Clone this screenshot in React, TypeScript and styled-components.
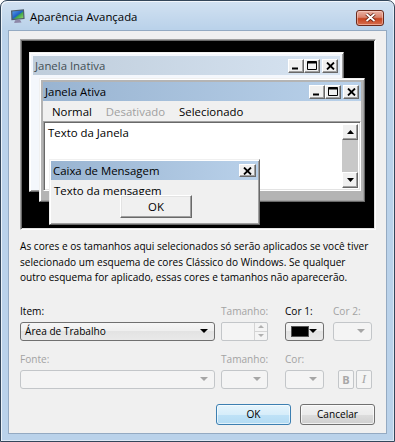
import styled, { createGlobalStyle } from 'styled-components'

const GlobalStyle = createGlobalStyle`
  html, body {
    margin: 0;
    padding: 0;
    background: #ffffff;
  }
  body {
    font-family: "Open Sans", "Noto Sans", "DejaVu Sans", sans-serif;
    font-size: 10.1px;
    color: #000;
  }
`

const Frame = styled.div`
  box-sizing: border-box;
  width: 395px;
  height: 442px;
  display: flex;
  flex-direction: column;
  padding: 0 7px 7px;
  border: 1px solid #34465a;
  border-radius: 7px 7px 0 0;
  background:
    linear-gradient(180deg, rgba(255, 255, 255, 0.35) 0, rgba(255, 255, 255, 0) 28px),
    #bad2ea;
  box-shadow: inset 1px 1px rgba(255, 255, 255, 0.7), inset -1px -1px rgba(255, 255, 255, 0.5);
`

const TitleBar = styled.div`
  height: 29px;
  display: flex;
  align-items: center;
  padding-left: 2px;
`

const TitleText = styled.span`
  margin-left: 4px;
  margin-top: 2px;
  font-size: 11.4px;
  color: #000;
`

const CloseButton = styled.div`
  margin-left: auto;
  margin-right: 3px;
  margin-top: 4px;
  width: 28px;
  height: 16px;
  box-sizing: border-box;
  border: 1px solid #6b2a1c;
  border-radius: 3px;
  display: flex;
  align-items: center;
  justify-content: center;
  background: linear-gradient(180deg, #eab2a4 0%, #d9826c 45%, #c5431f 55%, #d66f50 100%);
  box-shadow: inset 0 0 0 1px rgba(255, 220, 210, 0.5);
`

const Client = styled.div`
  flex: 1;
  display: flex;
  flex-direction: column;
  background: #f0f0f0;
  border: 1px solid #94aac2;
  padding: 8px 10px 0 11px;
`

/* ---------- preview ---------- */

const Preview = styled.div`
  position: relative;
  box-sizing: border-box;
  height: 191px;
  flex: none;
  font-size: 11.4px;
  background: #000;
  border: 1px solid;
  border-color: #a0a0a0 #ffffff #ffffff #a0a0a0;
  box-shadow: inset 1px 1px #696969, inset -1px -1px #e3e3e3;
  overflow: hidden;
`

const DemoWindow = styled.div<{ $active?: boolean }>`
  position: absolute;
  box-sizing: border-box;
  display: flex;
  flex-direction: column;
  padding: 3px;
  border: 1px solid;
  border-color: #f0f0f0 #696969 #696969 #f0f0f0;
  background: ${p => (p.$active ? '#b4b4b4' : '#f4f7fc')};
  box-shadow: inset 1px 1px #ffffff, inset -1px -1px #a0a0a0;
`

const Caption = styled.div<{ $active?: boolean }>`
  height: 19px;
  flex: none;
  display: flex;
  align-items: center;
  padding: 0 2px;
  background: ${p =>
    p.$active
      ? 'linear-gradient(90deg, #99b4d1, #b9d1ea)'
      : 'linear-gradient(90deg, #bfcddb, #d7e4f2)'};
  color: ${p => (p.$active ? '#000' : '#434e54')};
`

const CaptionTitle = styled.span`
  flex: 1;
  white-space: nowrap;
`

const CapButtons = styled.div`
  display: flex;
  align-items: center;
`

const CapBtn = styled.div<{ $gap?: number; $w?: number; $h?: number }>`
  box-sizing: border-box;
  width: ${p => p.$w ?? 16}px;
  height: ${p => p.$h ?? 14}px;
  margin-left: ${p => p.$gap ?? 0}px;
  background: #f0f0f0;
  border: 1px solid;
  border-color: #ffffff #696969 #696969 #ffffff;
  box-shadow: inset -1px -1px #a0a0a0;
  display: flex;
  align-items: center;
  justify-content: center;
`

const MenuBar = styled.div`
  height: 20px;
  flex: none;
  display: flex;
  align-items: center;
  background: #f0f0f0;
  padding-left: 2px;
`

const MenuItem = styled.span<{ $disabled?: boolean }>`
  padding: 0 7px;
  color: ${p => (p.$disabled ? '#a0a0a0' : '#000')};
`

const TextArea = styled.div`
  height: 70px;
  flex: none;
  display: flex;
  box-sizing: border-box;
  background: #fff;
  border: 1px solid;
  border-color: #a0a0a0 #ffffff #ffffff #a0a0a0;
  box-shadow: inset 1px 1px #696969, inset -1px -1px #e3e3e3;
  padding: 2px;
`

const TextBody = styled.div`
  flex: 1;
  padding: 1px 2px;
`

const ScrollBar = styled.div`
  width: 16px;
  display: flex;
  flex-direction: column;
  background: #c8c8c8;
`

const ScrollTrack = styled.div`
  flex: 1;
`

const MsgBody = styled.div`
  flex: 1;
  display: flex;
  flex-direction: column;
  background: #f0f0f0;
  padding: 3px 3px 0;
`

const MsgText = styled.div`
  line-height: 15px;
  white-space: nowrap;
`

const ClassicButton = styled.div`
  box-sizing: border-box;
  width: 72px;
  height: 23px;
  margin: -3px 0 0 66px;
  display: flex;
  align-items: center;
  justify-content: center;
  background: #f0f0f0;
  border: 1px solid;
  border-color: #ffffff #696969 #696969 #ffffff;
  box-shadow: inset -1px -1px #a0a0a0, inset 1px 1px #e3e3e3;
`

/* ---------- lower part ---------- */

const Description = styled.p`
  margin: 9px 0 0;
  line-height: 15.5px;
  white-space: nowrap;
`

const Fields = styled.div`
  margin-top: 18px;
  display: grid;
  grid-template-columns: 201px 64px 48px 1fr;
  row-gap: 11px;
`

const Field = styled.div`
  display: flex;
  flex-direction: column;
`

const Label = styled.span<{ $disabled?: boolean }>`
  line-height: 15px;
  margin-bottom: 3px;
  color: ${p => (p.$disabled ? '#a3a3a3' : '#000')};
  white-space: nowrap;
`

const Combo = styled.div<{ $w: number; $disabled?: boolean }>`
  box-sizing: border-box;
  width: ${p => p.$w}px;
  height: 19px;
  display: flex;
  align-items: center;
  padding: 0 6px 0 4px;
  border: 1px solid ${p => (p.$disabled ? '#c3c6c9' : '#707070')};
  border-radius: 3px;
  background: ${p =>
    p.$disabled
      ? '#f4f4f4'
      : 'linear-gradient(180deg, #f6f6f6 0%, #eeeeee 50%, #e3e3e3 50%, #e9e9e9 100%)'};
`

const ComboText = styled.span`
  flex: 1;
  white-space: nowrap;
`

const Arrow = styled.span<{ $disabled?: boolean }>`
  width: 0;
  height: 0;
  border-left: 4px solid transparent;
  border-right: 4px solid transparent;
  border-top: 4px solid ${p => (p.$disabled ? '#a6a6a6' : '#000')};
  margin-left: auto;
`

const Swatch = styled.span<{ $color: string }>`
  width: 20px;
  height: 11px;
  margin-left: 1px;
  background: ${p => p.$color};
  border: 1px solid #555;
  box-sizing: border-box;
`

const Spin = styled.div`
  box-sizing: border-box;
  width: 47px;
  height: 19px;
  display: flex;
  border: 1px solid #c3c6c9;
  border-radius: 2px;
  background: #f4f4f4;
`

const SpinButtons = styled.div`
  margin-left: auto;
  width: 12px;
  display: flex;
  flex-direction: column;
  border-left: 1px solid #d4d4d4;
`

const SpinPart = styled.div<{ $down?: boolean }>`
  flex: 1;
  display: flex;
  align-items: center;
  justify-content: center;
  border-top: ${p => (p.$down ? '1px solid #d4d4d4' : 'none')};
  &::after {
    content: '';
    border-left: 3px solid transparent;
    border-right: 3px solid transparent;
    ${p => (p.$down ? 'border-top: 3px solid #b0b0b0;' : 'border-bottom: 3px solid #b0b0b0;')}
  }
`

const StyleButtons = styled.div`
  display: flex;
  gap: 2px;
  margin-left: 5px;
`

const StyleBtn = styled.div<{ $italic?: boolean }>`
  box-sizing: border-box;
  width: 16px;
  height: 19px;
  display: flex;
  align-items: center;
  justify-content: center;
  border: 1px solid #c3c6c9;
  border-radius: 2px;
  background: #f4f4f4;
  color: #a8a8a8;
  font-family: ${p => (p.$italic ? '"Liberation Serif", serif' : '"Open Sans", sans-serif')};
  font-style: ${p => (p.$italic ? 'italic' : 'normal')};
  font-weight: ${p => (p.$italic ? 'normal' : 'bold')};
  font-size: ${p => (p.$italic ? '13px' : '11px')};
`

const Row = styled.div`
  display: flex;
  align-items: flex-end;
`

const ButtonRow = styled.div`
  display: flex;
  justify-content: flex-end;
  gap: 9px;
  margin-top: 15px;
  padding-right: 1px;
`

const DialogButton = styled.button<{ $default?: boolean }>`
  box-sizing: border-box;
  width: 75px;
  height: 21px;
  padding: 0;
  font-family: inherit;
  font-size: inherit;
  color: #000;
  border-radius: 3px;
  border: 1px solid ${p => (p.$default ? '#3c7fb1' : '#707070')};
  background: ${p =>
    p.$default
      ? 'linear-gradient(180deg, #e5f4fc 0%, #d6edfa 50%, #bfe2f7 50%, #b3dbf3 100%)'
      : 'linear-gradient(180deg, #f2f2f2 0%, #ebebeb 50%, #dddddd 50%, #cfcfcf 100%)'};
  box-shadow: inset 0 0 0 1px ${p => (p.$default ? 'rgba(255,255,255,0.6)' : 'rgba(255,255,255,0.7)')};
`

/* ---------- drawings ---------- */

const AppIcon = () => (
  <svg width="16" height="16" viewBox="0 0 16 16">
    <defs>
      <linearGradient id="scr" x1="0" y1="0" x2="1" y2="1">
        <stop offset="0" stopColor="#5aa2ef" />
        <stop offset="0.5" stopColor="#1f5fc4" />
        <stop offset="0.6" stopColor="#3fa94a" />
        <stop offset="1" stopColor="#9ad76e" />
      </linearGradient>
    </defs>
    <path d="M1 2.5 L14 1.2 L14.6 11 L1.4 12.2 Z" fill="#4e5c6c" />
    <path d="M2.3 3.5 L13 2.4 L13.4 9.9 L2.6 10.9 Z" fill="url(#scr)" />
    <path d="M5 12.2 L10 11.8 L11.5 14.6 L4.2 15 Z" fill="#8d87a8" />
  </svg>
)

const CloseGlyph = () => (
  <svg width="11" height="9" viewBox="0 0 11 9">
    <path d="M1.5 1 L9.5 8 M9.5 1 L1.5 8" stroke="#5c1b0e" strokeWidth="3.4" />
    <path d="M1.5 1 L9.5 8 M9.5 1 L1.5 8" stroke="#ffffff" strokeWidth="1.8" />
  </svg>
)

const MinGlyph = () => (
  <svg width="10" height="9" viewBox="0 0 10 9">
    <rect x="1" y="6.5" width="6" height="2" fill="#000" />
  </svg>
)

const MaxGlyph = () => (
  <svg width="10" height="9" viewBox="0 0 10 9">
    <path d="M0.5 0.5 H9.5 V8.5 H0.5 Z" fill="none" stroke="#000" />
    <rect x="0.5" y="0.5" width="9" height="2" fill="#000" />
  </svg>
)

const XGlyph = () => (
  <svg width="9" height="8" viewBox="0 0 9 8">
    <path d="M1 0.5 L8 7.5 M8 0.5 L1 7.5" stroke="#000" strokeWidth="1.8" />
  </svg>
)

const ScrollArrow = ({ down }: { down?: boolean }) => (
  <CapBtn $w={16} $h={16}>
    <svg width="7" height="4" viewBox="0 0 7 4">
      <path d={down ? 'M0 0 H7 L3.5 4 Z' : 'M0 4 H7 L3.5 0 Z'} fill="#000" />
    </svg>
  </CapBtn>
)

const CaptionControls = () => (
  <CapButtons>
    <CapBtn><MinGlyph /></CapBtn>
    <CapBtn><MaxGlyph /></CapBtn>
    <CapBtn $gap={2}><XGlyph /></CapBtn>
  </CapButtons>
)

export default function App() {
  return (
    <>
      <GlobalStyle />
      <Frame>
        <TitleBar>
          <AppIcon />
          <TitleText>Aparência Avançada</TitleText>
          <CloseButton><CloseGlyph /></CloseButton>
        </TitleBar>
        <Client>
          <Preview>
            <DemoWindow style={{ left: 8, top: 12, width: 315, height: 140 }}>
              <Caption>
                <CaptionTitle>Janela Inativa</CaptionTitle>
                <CaptionControls />
              </Caption>
            </DemoWindow>
            <DemoWindow $active style={{ left: 18, top: 38, width: 326, height: 124 }}>
              <Caption $active>
                <CaptionTitle>Janela Ativa</CaptionTitle>
                <CaptionControls />
              </Caption>
              <MenuBar>
                <MenuItem>Normal</MenuItem>
                <MenuItem $disabled>Desativado</MenuItem>
                <MenuItem>Selecionado</MenuItem>
              </MenuBar>
              <TextArea>
                <TextBody>Texto da Janela</TextBody>
                <ScrollBar>
                  <ScrollArrow />
                  <ScrollTrack />
                  <ScrollArrow down />
                </ScrollBar>
              </TextArea>
            </DemoWindow>
            <DemoWindow style={{ left: 28, top: 119, width: 211, height: 66, padding: 1 }}>
              <Caption $active>
                <CaptionTitle>Caixa de Mensagem</CaptionTitle>
                <CapBtn $w={17} $h={13}><XGlyph /></CapBtn>
              </Caption>
              <MsgBody>
                <MsgText>Texto da mensagem</MsgText>
                <ClassicButton>OK</ClassicButton>
              </MsgBody>
            </DemoWindow>
          </Preview>

          <Description>
            As cores e os tamanhos aqui selecionados só serão aplicados se você tiver
            <br />
            selecionado um esquema de cores Clássico do Windows. Se qualquer
            <br />
            outro esquema for aplicado, essas cores e tamanhos não aparecerão.
          </Description>

          <Fields>
            <Field>
              <Label>Item:</Label>
              <Combo $w={195}>
                <ComboText>Área de Trabalho</ComboText>
                <Arrow />
              </Combo>
            </Field>
            <Field>
              <Label $disabled>Tamanho:</Label>
              <Spin>
                <SpinButtons>
                  <SpinPart />
                  <SpinPart $down />
                </SpinButtons>
              </Spin>
            </Field>
            <Field>
              <Label>Cor 1:</Label>
              <Combo $w={39}>
                <Swatch $color="#000" />
                <Arrow />
              </Combo>
            </Field>
            <Field>
              <Label $disabled>Cor 2:</Label>
              <Combo $w={39} $disabled>
                <Arrow $disabled />
              </Combo>
            </Field>

            <Field>
              <Label $disabled>Fonte:</Label>
              <Combo $w={195} $disabled>
                <Arrow $disabled />
              </Combo>
            </Field>
            <Field>
              <Label $disabled>Tamanho:</Label>
              <Combo $w={47} $disabled>
                <Arrow $disabled />
              </Combo>
            </Field>
            <Field>
              <Label $disabled>Cor:</Label>
              <Combo $w={39} $disabled>
                <Arrow $disabled />
              </Combo>
            </Field>
            <Row>
              <StyleButtons>
                <StyleBtn>B</StyleBtn>
                <StyleBtn $italic>I</StyleBtn>
              </StyleButtons>
            </Row>
          </Fields>

          <ButtonRow>
            <DialogButton $default>OK</DialogButton>
            <DialogButton>Cancelar</DialogButton>
          </ButtonRow>
        </Client>
      </Frame>
    </>
  )
}
